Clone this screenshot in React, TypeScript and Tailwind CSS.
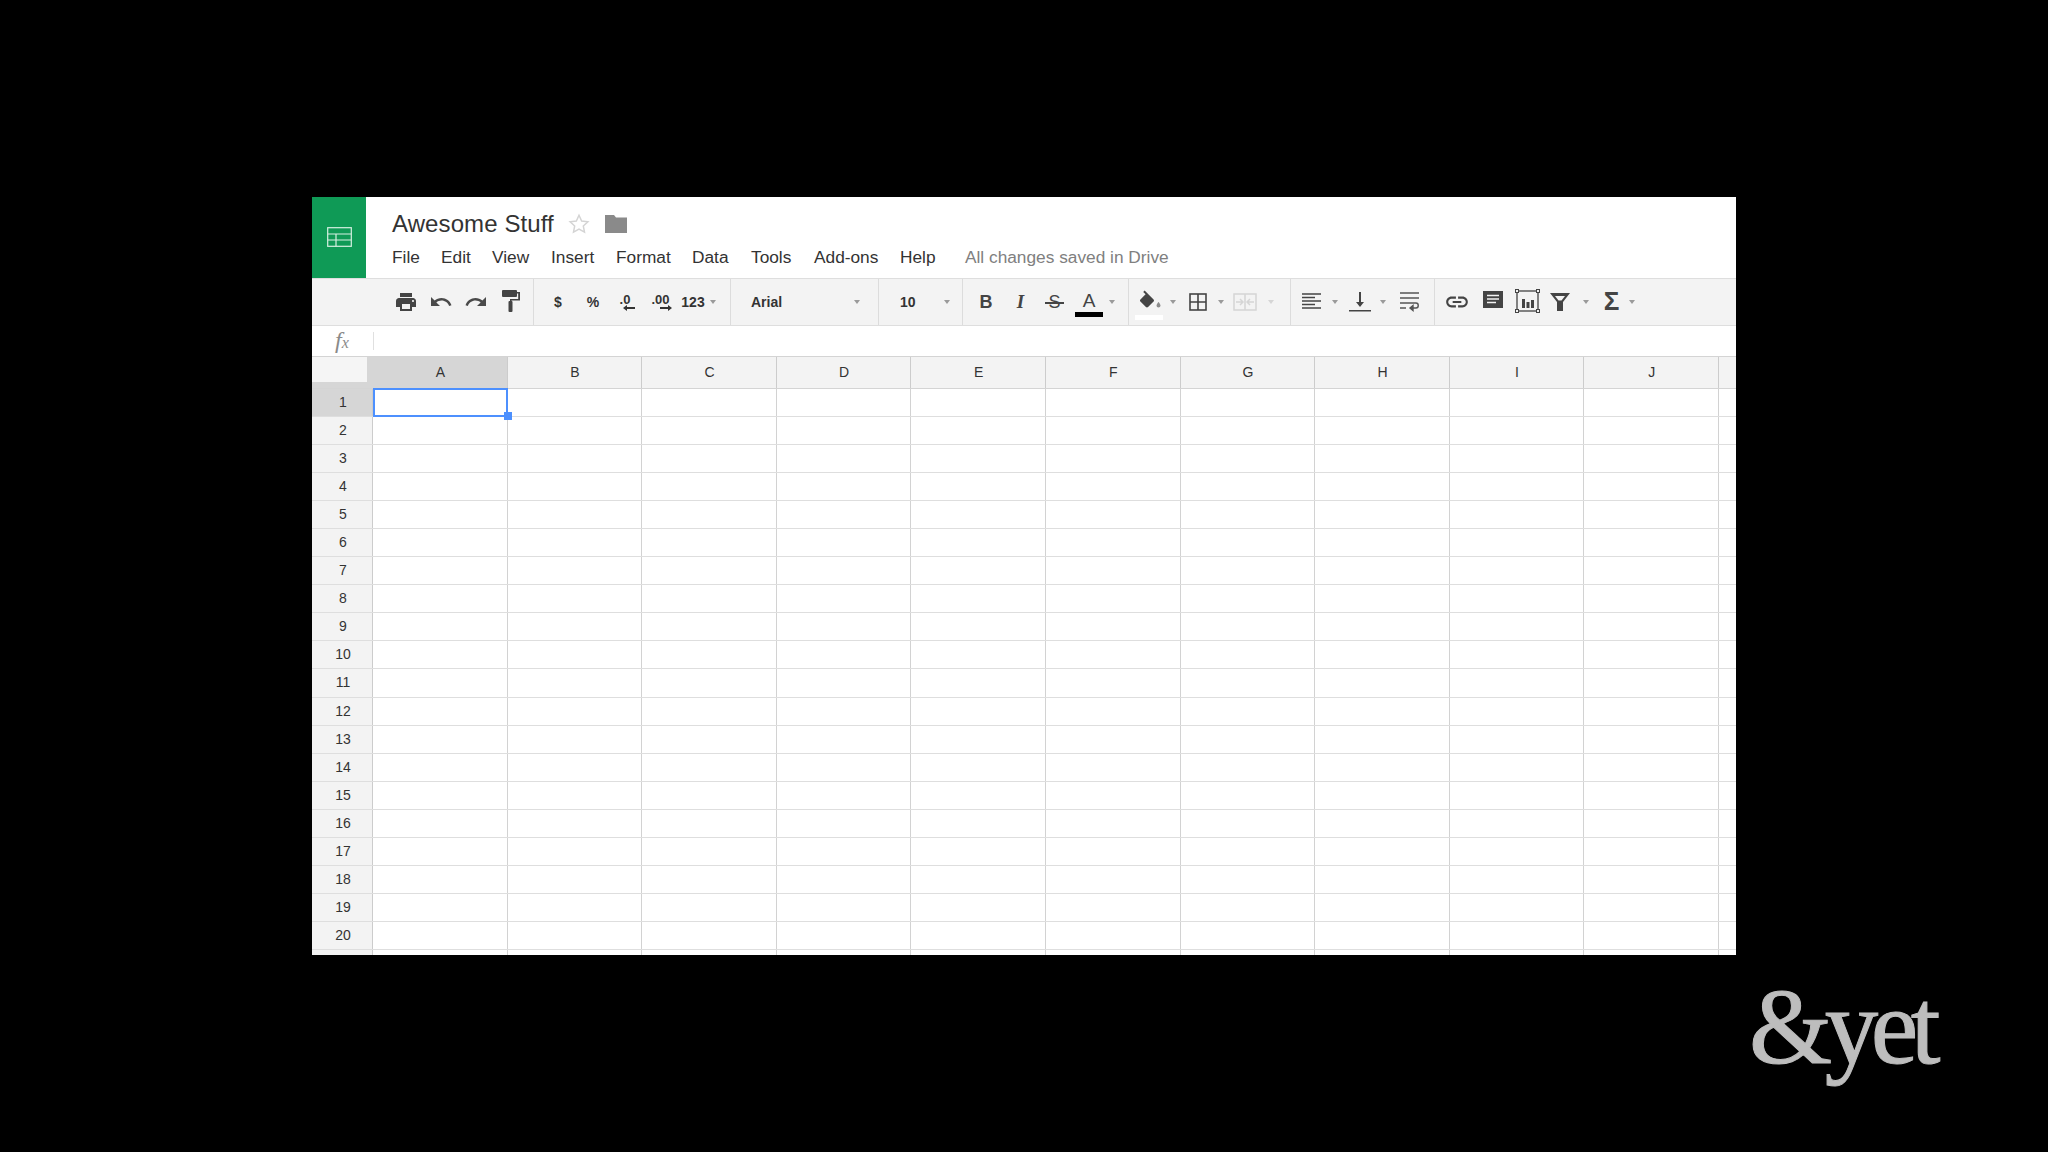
import type { ReactNode } from 'react';

const columns = ['A', 'B', 'C', 'D', 'E', 'F', 'G', 'H', 'I', 'J'];
const rows = Array.from({ length: 21 }, (_, i) => i + 1);
const menus = [
  { label: 'File', width: 'w-[49px]' },
  { label: 'Edit', width: 'w-[51px]' },
  { label: 'View', width: 'w-[59px]' },
  { label: 'Insert', width: 'w-[65px]' },
  { label: 'Format', width: 'w-[76px]' },
  { label: 'Data', width: 'w-[59px]' },
  { label: 'Tools', width: 'w-[63px]' },
  { label: 'Add-ons', width: 'w-[86px]' },
  { label: 'Help', width: 'w-[65px]' },
];

function Slot({ w, children }: { w: string; children: ReactNode }) {
  return <div className={`${w} h-full flex items-center justify-center shrink-0`}>{children}</div>;
}

function Caret({ light }: { light?: boolean }) {
  return (
    <div
      className={`w-0 h-0 shrink-0 border-x-[3.5px] border-x-transparent border-t-[4px] ${
        light ? 'border-t-[#d5d5d5]' : 'border-t-[#9a9a9a]'
      }`}
    />
  );
}

function Group({ w, pl, children }: { w: string; pl?: string; children: ReactNode }) {
  return <div className={`${w} ${pl ?? ''} h-full flex items-center shrink-0 border-r border-[#dcdcdc]`}>{children}</div>;
}

function Toolbar() {
  return (
    <div className="h-[48px] flex bg-[#f3f3f3] border-y border-[#dedede] text-[#333333]">
      <Group w="w-[222px]" pl="pl-[76px]">
        <Slot w="w-[35px]">
          <svg width="24" height="24" viewBox="0 0 24 24" fill="#444444">
            <path d="M19 8H5c-1.66 0-3 1.34-3 3v6h4v4h12v-4h4v-6c0-1.66-1.34-3-3-3zm-3 11H8v-5h8v5zm3-7c-.55 0-1-.45-1-1s.45-1 1-1 1 .45 1 1-.45 1-1 1zm-1-9H6v4h12V3z" />
          </svg>
        </Slot>
        <Slot w="w-[36px]">
          <svg width="24" height="24" viewBox="0 0 24 24" fill="#4a4a4a">
            <path d="M12.5 8c-2.65 0-5.05.99-6.9 2.6L2 7v9h9l-3.62-3.62c1.39-1.16 3.16-1.88 5.12-1.88 3.54 0 6.55 2.31 7.6 5.5l2.37-.78C21.08 11.03 17.15 8 12.5 8z" />
          </svg>
        </Slot>
        <Slot w="w-[34px]">
          <svg width="24" height="24" viewBox="0 0 24 24" fill="#4a4a4a">
            <path d="M18.4 10.6C16.55 8.99 14.15 8 11.5 8c-4.65 0-8.58 3.03-9.96 7.22L3.9 16c1.05-3.19 4.05-5.5 7.6-5.5 1.95 0 3.73.72 5.12 1.88L13 16h9V7l-3.6 3.6z" />
          </svg>
        </Slot>
        <Slot w="w-[35px]">
          <svg width="18" height="22" viewBox="0 0 18 22" fill="#444444" className="-mt-[3px]">
            <rect x="0" y="0" width="15" height="7" rx="1" />
            <path d="M15 2h3v8.5H9.5V12H8v-3h8.2V3.5H15z" />
            <rect x="6.5" y="11" width="4" height="11" rx="1" />
          </svg>
        </Slot>
      </Group>
      <Group w="w-[197px]" pl="pl-[7px]">
        <Slot w="w-[34px]">
          <span className="text-[14px] font-bold">$</span>
        </Slot>
        <Slot w="w-[36px]">
          <span className="text-[14px] font-bold">%</span>
        </Slot>
        <Slot w="w-[28px]">
          <div className="flex flex-col items-center">
            <span className="text-[13px] leading-[13px] font-bold -mt-[1px]">.0</span>
            <svg width="12" height="6" viewBox="0 0 12 6" fill="#333333" className="ml-[8px] -mt-[1px]">
              <path d="M0 3l4-3v2h8v2H4v2z" />
            </svg>
          </div>
        </Slot>
        <Slot w="w-[43px]">
          <div className="flex flex-col items-center">
            <span className="text-[13px] leading-[13px] font-bold -mt-[1px]">.00</span>
            <svg width="12" height="6" viewBox="0 0 12 6" fill="#333333" className="ml-[10px] -mt-[1px]">
              <path d="M12 3L8 0v2H0v2h8v2z" />
            </svg>
          </div>
        </Slot>
        <Slot w="w-[22px]">
          <span className="text-[14px] font-bold">123</span>
        </Slot>
        <Slot w="w-[17px]">
          <Caret />
        </Slot>
      </Group>
      <Group w="w-[148px]" pl="pl-[20px] pr-[18px] justify-between">
        <span className="text-[14px] font-bold">Arial</span>
        <Caret />
      </Group>
      <Group w="w-[84px]" pl="pl-[21px] pr-[12px] justify-between">
        <span className="text-[14px] font-bold">10</span>
        <Caret />
      </Group>
      <Group w="w-[166px]" pl="pl-[6px]">
        <Slot w="w-[34px]">
          <span className="text-[18px] font-bold text-[#444444]">B</span>
        </Slot>
        <Slot w="w-[35px]">
          <span className="text-[19px] font-bold italic text-[#444444] font-['Liberation_Serif',serif]">I</span>
        </Slot>
        <Slot w="w-[33px]">
          <span className="relative text-[18px] text-[#444444]">
            S
            <span className="absolute -left-[3px] -right-[3px] top-1/2 h-[2px] bg-[#444444]" />
          </span>
        </Slot>
        <Slot w="w-[36px]">
          <div className="flex flex-col items-center">
            <span className="text-[19px] leading-[19px] text-[#444444] mt-[3px]">A</span>
            <div className="w-[28px] h-[5px] bg-black mt-[2px]" />
          </div>
        </Slot>
        <Slot w="w-[10px]">
          <Caret />
        </Slot>
      </Group>
      <Group w="w-[162px]">
        <Slot w="w-[39px]">
          <div className="flex flex-col items-center">
            <svg width="24" height="21" viewBox="0 0 24 20" fill="#444444" className="mt-[5px]">
              <path d="M16.56 8.94L7.62 0 6.21 1.41l2.38 2.38-5.15 5.15c-.59.59-.59 1.54 0 2.12l5.5 5.5c.29.29.68.44 1.06.44s.77-.15 1.06-.44l5.5-5.5c.59-.58.59-1.53 0-2.12z" />
              <path d="M21.5 11.5s-2 2.17-2 3.5c0 1.1.9 2 2 2s2-.9 2-2c0-1.33-2-3.5-2-3.5z" fill="#8c8c8c" />
            </svg>
            <div className="w-[28px] h-[5px] bg-white mt-[4px]" />
          </div>
        </Slot>
        <Slot w="w-[10px]">
          <Caret />
        </Slot>
        <Slot w="w-[39px]">
          <svg width="18" height="18" viewBox="0 0 18 18" fill="none" stroke="#444444" strokeWidth="1.6">
            <rect x="1" y="1" width="16" height="16" />
            <path d="M9 1v16M1 9h16" />
          </svg>
        </Slot>
        <Slot w="w-[8px]">
          <Caret />
        </Slot>
        <Slot w="w-[40px]">
          <svg width="24" height="18" viewBox="0 0 24 18" fill="none" stroke="#d5d5d5" strokeWidth="1.5">
            <rect x="1" y="1" width="22" height="16" />
            <path d="M12 1v16M3 9h6M15 9h6M7 6l3 3-3 3M17 6l-3 3 3 3" />
          </svg>
        </Slot>
        <Slot w="w-[12px]">
          <Caret light />
        </Slot>
      </Group>
      <Group w="w-[144px]" pl="pl-[3px]">
        <Slot w="w-[35px]">
          <svg width="20" height="18" viewBox="0 0 20 18" fill="none" stroke="#444444" strokeWidth="1.5">
            <path d="M0 1h19M0 4.5h13M0 8h19M0 11.5h13M0 15h19" />
          </svg>
        </Slot>
        <Slot w="w-[12px]">
          <Caret />
        </Slot>
        <Slot w="w-[38px]">
          <svg width="22" height="20" viewBox="0 0 22 20" fill="#444444">
            <path d="M10 0h2v10h3l-4 5-4-5h3z" />
            <rect x="0" y="18" width="22" height="1.5" />
          </svg>
        </Slot>
        <Slot w="w-[8px]">
          <Caret />
        </Slot>
        <Slot w="w-[46px]">
          <svg width="20" height="20" viewBox="0 0 20 20" fill="none" stroke="#555555" strokeWidth="1.4">
            <path d="M0 1h19M0 6h19M0 11h16c3 0 3 5 0 5h-4M0 16h6" />
            <path d="M13 13.5l-3 2.5 3 2.5z" fill="#555555" />
          </svg>
        </Slot>
      </Group>
      <div className="flex-1 h-full flex items-center pl-[5px]">
        <Slot w="w-[36px]">
          <svg width="26" height="26" viewBox="0 0 24 24" fill="#444444" className="-ml-[2px]">
            <path d="M3.9 12c0-1.71 1.39-3.1 3.1-3.1h4V7H7c-2.76 0-5 2.24-5 5s2.24 5 5 5h4v-1.9H7c-1.71 0-3.1-1.39-3.1-3.1zM8 13h8v-2H8v2zm9-6h-4v1.9h4c1.71 0 3.1 1.39 3.1 3.1s-1.39 3.1-3.1 3.1h-4V17h4c2.76 0 5-2.24 5-5s-2.24-5-5-5z" />
          </svg>
        </Slot>
        <Slot w="w-[34px]">
          <svg width="22" height="20" viewBox="0 0 22 20" className="-mt-[3px]">
            <path d="M1 0h20v17H1z" fill="#444444" />
            <path d="M5 4.5h12M5 8h12M5 11.5h9" stroke="#f3f3f3" strokeWidth="1.6" />
          </svg>
        </Slot>
        <Slot w="w-[34px]">
          <svg width="25" height="24" viewBox="0 0 25 24" fill="none" className="-mt-[2px]">
            <rect x="2" y="2" width="21" height="20" stroke="#444444" strokeWidth="1.3" />
            <rect x="0.5" y="0.5" width="3" height="3" fill="#f3f3f3" stroke="#444444" />
            <rect x="21.5" y="0.5" width="3" height="3" fill="#f3f3f3" stroke="#444444" />
            <rect x="0.5" y="20.5" width="3" height="3" fill="#f3f3f3" stroke="#444444" />
            <rect x="21.5" y="20.5" width="3" height="3" fill="#f3f3f3" stroke="#444444" />
            <path d="M7 10h3v9H7zM11.5 13h3v6h-3zM16 11h3v8h-3z" fill="#444444" />
          </svg>
        </Slot>
        <Slot w="w-[32px]">
          <svg width="20" height="20" viewBox="0 0 20 20" fill="#444444" className="-mt-[1px]">
            <path d="M0 1h20l-7 9v9H7v-9zM5 4l3.5 4.5h3L15 4z" fillRule="evenodd" />
          </svg>
        </Slot>
        <Slot w="w-[20px]">
          <Caret />
        </Slot>
        <Slot w="w-[31px]">
          <span className="text-[26px] leading-[26px] font-bold text-[#444444] -mt-[3px]">Σ</span>
        </Slot>
        <Slot w="w-[10px]">
          <Caret />
        </Slot>
      </div>
    </div>
  );
}

function Sheet() {
  return (
    <div className="relative">
      <div className="grid grid-cols-[61px_repeat(10,134.6px)_1fr] h-[33px] bg-[#f3f3f3] border-y border-[#d4d4d4] text-[14px] text-[#333333]">
        <div className="bg-[#d6d6d6] pr-[6px] pb-[6px]">
          <div className="w-full h-full bg-[#f5f5f5]" />
        </div>
        {columns.map((c, i) => (
          <div
            key={c}
            className={`flex items-center justify-center pl-[1px] border-r border-[#cccccc] ${i === 0 ? 'bg-[#d6d6d6]' : ''}`}
          >
            {c}
          </div>
        ))}
        <div />
      </div>
      {rows.map((r) => (
        <div
          key={r}
          className="grid grid-cols-[61px_repeat(10,134.6px)_1fr] h-[28.05px] border-b border-[#dedede] text-[14px] text-[#333333]"
        >
          <div
            className={`flex items-center justify-center pl-[2px] border-r border-[#cccccc] ${
              r === 1 ? 'bg-[#d6d6d6]' : 'bg-[#f3f3f3]'
            }`}
          >
            {r === 21 ? '' : r}
          </div>
          {columns.map((c) => (
            <div key={c} className="border-r border-[#d2d2d2]" />
          ))}
          <div />
        </div>
      ))}
      {/* selected cell A1 */}
      <div className="absolute left-[61px] top-[32px] w-[135px] h-[29px] border-2 border-[#4d90fe]">
        <div className="absolute -right-[6px] -bottom-[5px] w-[8px] h-[8px] bg-[#4d90fe]" />
      </div>
    </div>
  );
}

export default function App() {
  return (
    <div className="w-[2048px] h-[1152px] bg-black overflow-hidden pt-[197px] font-['Liberation_Sans',Arial,sans-serif]">
      <div className="ml-[312px] w-[1424px] h-[758px] bg-white overflow-hidden">
        <div className="h-[81px] flex">
          <div className="w-[54px] bg-[#0f9a56] flex items-center justify-center">
            <svg width="25" height="20" viewBox="0 0 25 20" fill="none" stroke="#d6f0e2" strokeWidth="1.2" className="-mt-[2px]">
              <rect x="0.7" y="0.7" width="23.6" height="18.6" />
              <path d="M0.7 7h23.6M0.7 13h23.6M9 7v12.3" />
            </svg>
          </div>
          <div className="pl-[26px]">
            <div className="h-[42px] pt-[11px] flex items-center">
              <span className="w-[176px] text-[24px] tracking-[0.1px] text-[#333333]">Awesome Stuff</span>
              <svg width="22" height="22" viewBox="0 0 24 24" fill="none" stroke="#d4d4d4" strokeWidth="1.6">
                <path d="M12 2.5l2.9 6.2 6.8.8-5 4.6 1.3 6.7-6-3.3-6 3.3 1.3-6.7-5-4.6 6.8-.8z" />
              </svg>
              <svg width="22" height="18" viewBox="0 0 22 18" fill="#8a8a8a" className="ml-[15px]">
                <path d="M0 0h9l2 2.5h11V18H0z" />
              </svg>
            </div>
            <div className="h-[36px] pt-[2px] flex items-center text-[17.3px] text-[#333333]">
              {menus.map((m) => (
                <span key={m.label} className={m.width}>
                  {m.label}
                </span>
              ))}
              <span className="text-[#808080]">All changes saved in Drive</span>
            </div>
          </div>
        </div>
        <Toolbar />
        <div className="h-[30px] flex items-center">
          <div className="w-[61px] flex justify-center items-center pr-[1px]">
            <span className="font-['Liberation_Serif',serif] italic text-[24px] leading-[24px] text-[#8a8a8a]">
              f<span className="text-[16px]">x</span>
            </span>
          </div>
          <div className="w-px h-[18px] bg-[#e0e0e0]" />
        </div>
        <Sheet />
      </div>
      <div className="flex justify-end pr-[115px] mt-[19px]">
        <span className="font-['Liberation_Serif',serif] text-[107px] leading-[107px] tracking-[-7.5px] text-[#bdbdbd] [-webkit-text-stroke:1px_#bdbdbd]">
          &amp;yet
        </span>
      </div>
    </div>
  );
}
